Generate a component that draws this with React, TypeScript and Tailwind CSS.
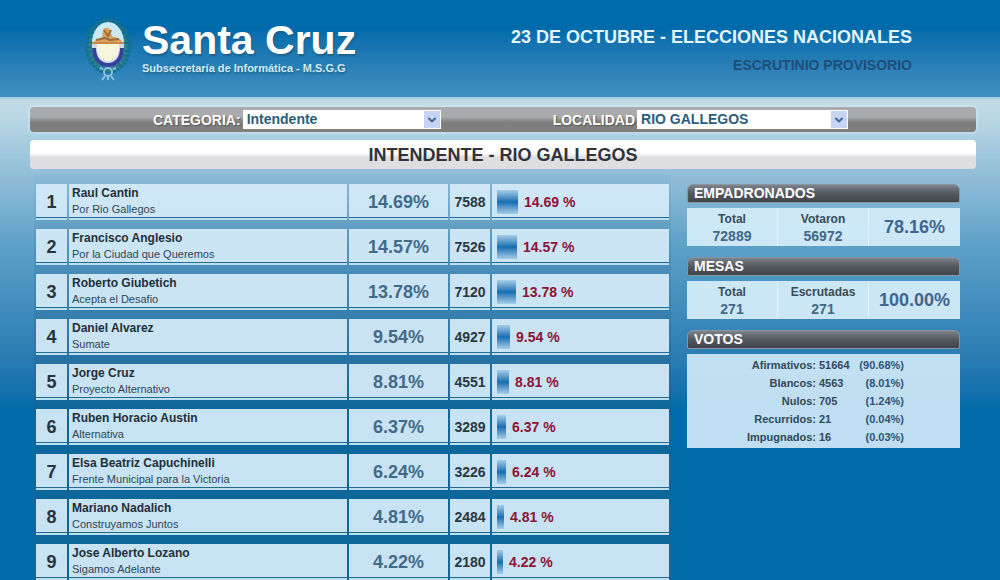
import { ChevronDown } from "lucide-react";

type Candidate = {
  name: string;
  party: string;
  percent: number;
  votes: number;
};

const candidates: Candidate[] = [
  { name: "Raul Cantin", party: "Por Rio Gallegos", percent: 14.69, votes: 7588 },
  { name: "Francisco Anglesio", party: "Por la Ciudad que Queremos", percent: 14.57, votes: 7526 },
  { name: "Roberto Giubetich", party: "Acepta el Desafio", percent: 13.78, votes: 7120 },
  { name: "Daniel Alvarez", party: "Sumate", percent: 9.54, votes: 4927 },
  { name: "Jorge Cruz", party: "Proyecto Alternativo", percent: 8.81, votes: 4551 },
  { name: "Ruben Horacio Austin", party: "Alternativa", percent: 6.37, votes: 3289 },
  { name: "Elsa Beatriz Capuchinelli", party: "Frente Municipal para la Victoria", percent: 6.24, votes: 3226 },
  { name: "Mariano Nadalich", party: "Construyamos Juntos", percent: 4.81, votes: 2484 },
  { name: "Jose Alberto Lozano", party: "Sigamos Adelante", percent: 4.22, votes: 2180 },
];

const voteTypes = [
  { label: "Afirmativos:", count: "51664", percent: "(90.68%)" },
  { label: "Blancos:", count: "4563", percent: "(8.01%)" },
  { label: "Nulos:", count: "705", percent: "(1.24%)" },
  { label: "Recurridos:", count: "21", percent: "(0.04%)" },
  { label: "Impugnados:", count: "16", percent: "(0.03%)" },
];

// pixels per percentage point in the bar column
const BAR_SCALE = 1.4;

function Emblem() {
  return (
    <svg viewBox="0 0 48 64" className="h-16 w-12 shrink-0" aria-hidden="true">
      <ellipse cx="24" cy="28" rx="20" ry="25" fill="none" stroke="#17708f" strokeWidth="6" strokeDasharray="3 1" />
      <ellipse cx="24" cy="29" rx="18" ry="23" fill="none" stroke="#2f8577" strokeWidth="3" strokeDasharray="3 2" />
      <ellipse cx="24" cy="25" rx="16" ry="21" fill="#c9eaf2" />
      <path d="M8 25h32c1 15-6 24-16 24S7 40 8 25z" fill="#cfd9ee" />
      <path d="M10 30c0 11 6 17 14 17s14-6 14-17" fill="none" stroke="#35419a" strokeWidth="4" />
      <path d="M13 26h22c1 9-3 17-11 17S12 35 13 26z" fill="#f6f6dc" />
      <path d="M9 25c3-5 7-3 9-6l1-7c2-3 6-3 7 0l2 6c4 2 8 1 11 7z" fill="#dda35c" />
      <path d="M20 12l4 6 3-6M12 22l9-2 5 2 9-1" fill="none" stroke="#9a6e3c" strokeWidth="2" />
      <path d="M8 25h32" stroke="#c98845" strokeWidth="2" />
      <circle cx="24" cy="54" r="4" fill="none" stroke="#8fc1e2" strokeWidth="2" />
      <path d="M19 51l-3-1M29 51l3-1M21 58l-3 4M27 58l3 4M24 58v4" fill="none" stroke="#8fc1e2" strokeWidth="2" />
    </svg>
  );
}

function FilterSelect({ id, label, value, width }: { id: string; label: string; value: string; width: string }) {
  return (
    <div className="flex items-center gap-0.5">
      <label htmlFor={id} className="text-sm font-bold text-white [text-shadow:1px_1px_1px_#555]">
        {label}
      </label>
      <div className={`relative ${width}`}>
        <select
          id={id}
          className="block h-[19px] w-full appearance-none bg-white pl-1 pr-5 text-sm leading-[19px] font-bold text-[#2b5e7c]"
        >
          <option>{value}</option>
        </select>
        <span className="pointer-events-none absolute inset-y-px right-px flex w-4 items-center justify-center bg-[#c6d5f3]">
          <ChevronDown size={12} strokeWidth={4} color="#46699c" />
        </span>
      </div>
    </div>
  );
}

function PanelTitle({ children }: { children: string }) {
  return (
    <h2 className="h-[19px] rounded-t-md rounded-b-xs border border-[#8796a3] bg-linear-to-b from-[#7d848b] via-[#54585f] via-50% to-[#41454b] pl-1.5 text-sm leading-[17px] font-bold text-white">
      {children}
    </h2>
  );
}

function StatsPanel({ title, stats, percent }: { title: string; stats: string[][]; percent: string }) {
  return (
    <section>
      <PanelTitle>{title}</PanelTitle>
      <div className="mt-[5px] grid h-[38px] grid-cols-3 divide-x divide-white/50 bg-[#d3ebf8]/95 text-center font-bold">
        {stats.map(([label, value]) => (
          <dl key={label} className="pt-0.5">
            <dt className="text-xs leading-[18px] text-[#3a4b59]">{label}</dt>
            <dd className="text-sm leading-4 text-[#41698c]">{value}</dd>
          </dl>
        ))}
        <p className="self-center text-lg leading-5 text-[#40658f]">{percent}</p>
      </div>
    </section>
  );
}

export default function App() {
  return (
    <div className="min-h-screen bg-[#006ba8] bg-linear-to-b from-[#bfdae6] from-[110px] via-[#5a9fc8] via-[250px] to-[#006ba8] to-[410px] font-['Liberation_Sans',Arial,sans-serif]">
      <header className="flex h-[99px] justify-between border-b-2 border-[#a9cde0] bg-linear-to-b from-[#006bab] from-30% to-[#3f91c1] pr-[88px] pl-[84px]">
        <div className="flex items-start gap-2.5 pt-[18px]">
          <Emblem />
          <div className="font-bold text-white [text-shadow:1px_2px_2px_#1d5f8c]">
            <h1 className="text-[41px] leading-[44px]">Santa Cruz</h1>
            <p className="text-[11px] leading-3 text-[#d2ebf7]">Subsecretaría de Informática - M.S.G.G</p>
          </div>
        </div>
        <div className="pt-[26px] text-right font-bold">
          <p className="text-lg leading-[22px] text-[#e2f5fc]">23 DE OCTUBRE - ELECCIONES NACIONALES</p>
          <p className="mt-2 text-sm leading-[18px] text-[#1f4e78]">ESCRUTINIO PROVISORIO</p>
        </div>
      </header>

      <main className="pt-2 pr-6 pl-[30px]">
        <form className="flex h-[25px] items-center gap-28 rounded-sm bg-linear-to-b from-[#a9abac] from-40% to-[#7f7f7f] to-60% pl-[123px] shadow-[0_0_2px_2px_#ffffff40]">
          <FilterSelect id="categoria" label="CATEGORIA:" value="Intendente" width="w-[198px]" />
          <FilterSelect id="localidad" label="LOCALIDAD" value="RIO GALLEGOS" width="w-[211px]" />
        </form>

        <h2 className="mt-2 h-[29px] rounded-sm bg-linear-to-b from-white from-45% to-[#dedddf] to-60% text-center text-lg leading-[31px] font-bold text-[#30333b]">
          INTENDENTE - RIO GALLEGOS
        </h2>

        <div className="mt-1.5 grid grid-cols-[minmax(0,7fr)_minmax(0,3fr)] gap-4 pr-4 pl-1">
          <table className="w-full table-fixed border-separate border-spacing-x-[2px] border-spacing-y-[9px] bg-linear-to-b from-[#245f82]/5 to-[#245f82]/35 to-[200px] font-bold">
            <colgroup>
              <col className="w-[31px]" />
              <col />
              <col className="w-[99px]" />
              <col className="w-[40px]" />
              <col className="w-[177px]" />
            </colgroup>
            <tbody>
              {candidates.map((c, i) => (
                <tr
                  key={c.name}
                  className="h-9 [&>td]:bg-[linear-gradient(#d3eaf8f0_33px,#24698f_33px,#24698f_34px,#b9dff1_34px)] [&>td]:p-0"
                >
                  <td className="text-center text-lg leading-5 text-[#26343c]">{i + 1}</td>
                  <td className="align-top">
                    <div className="pl-[3px]">
                      <p className="text-xs leading-[18px] text-[#1e2f3a]">{c.name}</p>
                      <p className="text-[11px] leading-[14px] font-normal text-[#2d4656]">{c.party}</p>
                    </div>
                  </td>
                  <td className="text-center text-lg leading-5 text-[#426a8a]">{c.percent.toFixed(2)}%</td>
                  <td className="text-center text-sm leading-5 text-[#2b373f]">{c.votes}</td>
                  <td>
                    <div className="flex items-center gap-1.5 pl-[5px]">
                      <span
                        className="h-6 bg-linear-to-b from-[#a5cde6] via-[#0d6fb1] to-[#a5cde6]"
                        style={{ width: Math.round(c.percent * BAR_SCALE) }}
                      />
                      <span className="text-sm leading-5 text-[#8e1235]">{c.percent.toFixed(2)} %</span>
                    </div>
                  </td>
                </tr>
              ))}
            </tbody>
          </table>

          <aside className="flex flex-col gap-[11px] pt-[9px]">
            <StatsPanel title="EMPADRONADOS" stats={[["Total", "72889"], ["Votaron", "56972"]]} percent="78.16%" />
            <StatsPanel title="MESAS" stats={[["Total", "271"], ["Escrutadas", "271"]]} percent="100.00%" />
            <section>
              <PanelTitle>VOTOS</PanelTitle>
              <div className="mt-[5px] bg-[#d3ebf8]/90 py-0.5 pr-14">
                <table className="w-full text-[11px] leading-[18px] font-bold text-[#32485a]">
                  <tbody>
                    {voteTypes.map((v) => (
                      <tr key={v.label}>
                        <th scope="row" className="p-0 text-right">{v.label}</th>
                        <td className="w-10 p-0 pl-[3px]">{v.count}</td>
                        <td className="w-12 p-0 text-right text-[#2f5378]">{v.percent}</td>
                      </tr>
                    ))}
                  </tbody>
                </table>
              </div>
            </section>
          </aside>
        </div>
      </main>
    </div>
  );
}
